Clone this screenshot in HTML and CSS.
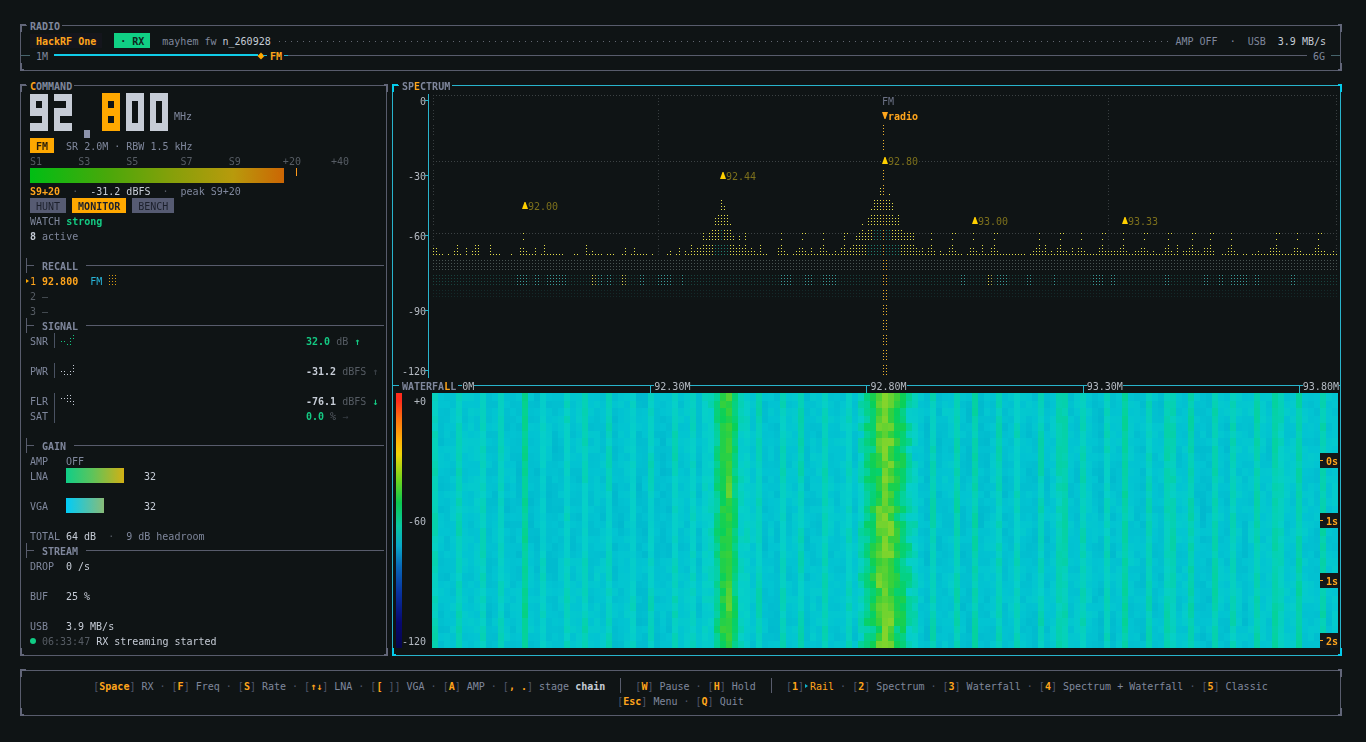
FILE: index.html
```
<!DOCTYPE html>
<html lang="en">
<head>
  <meta charset="UTF-8">
  <meta name="viewport" content="width=device-width, initial-scale=1.0">
  <title>HackRF One - RX 92.800 MHz</title>
  <link rel="stylesheet" href="styles.css">
</head>
<body>
  <!-- device bar -->
  <header class="panel">
    <h2 class="panel-title">RADIO</h2>
    <div class="row device">
      <strong class="device-name">HackRF One</strong>
      <span class="badge rx">· RX</span>
      <span>mayhem fw <span class="bright">n_260928</span></span>
      <span class="leader"></span>
      <span class="pre">AMP OFF  ·  USB  <span class="bright">3.9 MB/s</span></span>
    </div>
    <div class="row band">
      <span class="band-edge"></span>
      <span>1M</span>
      <span class="band-fill"></span>
      <svg class="band-mark" width="8" height="8" viewBox="0 0 8 8"><path d="M4 0.500L7.500 4L4 7.500L0.500 4z" fill="#ffa800"/></svg>
      <span class="band-dash"></span>
      <b class="orange">FM</b>
      <span class="band-dash"></span>
      <span class="band-rest"></span>
      <span>6G</span>
      <span class="band-edge"></span>
    </div>
    <i class="corner tl"></i><i class="corner tr"></i><i class="corner bl"></i><i class="corner br"></i>
  </header>

  <main>
    <section class="panel command">
      <h2 class="panel-title"><span class="orange">C</span>OMMAND</h2>

      <div class="frequency">
        <canvas id="digits" width="138" height="45" role="img" aria-label="92.800"></canvas>
        <span>MHz</span>
      </div>
      <div class="row"><span class="badge fm">FM</span><span class="pre">  SR 2.0M · RBW 1.5 kHz</span></div>
      <div class="row pre dim">S1      S3      S5       S7      S9       +20     +40</div>
      <div class="row meter"><span class="meter-fill"></span><span class="meter-peak"></span></div>
      <div class="row pre"><b class="orange">S9+20</b>  <span class="dim">·</span>  <span class="bright">-31.2 dBFS</span>  <span class="dim">·</span>  peak S9+20</div>
      <div class="row modes">
        <button type="button">HUNT</button>
        <button type="button" class="active">MONITOR</button>
        <button type="button">BENCH</button>
      </div>
      <div class="row pre">WATCH <b class="green">strong</b></div>
      <div class="row pre"><b class="bright">8</b> active</div>
      <div class="row"></div>

      <h3 class="section">RECALL</h3>
      <div class="row pre recall"><span class="orange">1</span> <b class="orange">92.800</b>  <span class="cyan">FM</span> <svg width="9" height="15" viewBox="0 0 9 15" shape-rendering="crispEdges"><path fill="#d99a10" d="M1 2h1v1H1zM4 2h1v1H4zM7 2h1v1H7zM1 5h1v1H1zM4 5h1v1H4zM7 5h1v1H7zM1 8h1v1H1zM4 8h1v1H4zM7 8h1v1H7zM1 11h1v1H1zM4 11h1v1H4zM7 11h1v1H7z"/></svg></div>
      <div class="row pre dim">2 –</div>
      <div class="row pre dim">3 –</div>

      <h3 class="section">SIGNAL</h3>
      <div class="row signal">
        <span class="signal-name">SNR</span>
        <svg width="16" height="15" viewBox="0 0 16 15" shape-rendering="crispEdges"><path fill="#14c882" d="M1 8h1v1H1zM4 8h1v1H4zM7 11h1v1H7zM10 11h1v1h-1zM10 8h1v1h-1zM10 5h1v1h-1zM13 5h1v1h-1zM13 2h1v1h-1z"/></svg>
        <span class="pre"><b class="green">32.0</b> <span class="dim">dB</span> <b class="green">↑</b></span>
      </div>
      <div class="row"></div>
      <div class="row signal">
        <span class="signal-name">PWR</span>
        <svg width="16" height="15" viewBox="0 0 16 15" shape-rendering="crispEdges"><path fill="#c6ccd6" d="M1 8h1v1H1zM4 8h1v1H4zM4 11h1v1H4zM7 11h1v1H7zM10 11h1v1h-1zM10 8h1v1h-1zM13 8h1v1h-1zM13 5h1v1h-1zM13 2h1v1h-1z"/></svg>
        <span class="pre"><b class="bright">-31.2</b> <span class="dim">dBFS</span> <b class="faint">↑</b></span>
      </div>
      <div class="row"></div>
      <div class="row signal">
        <span class="signal-name">FLR</span>
        <svg width="16" height="15" viewBox="0 0 16 15" shape-rendering="crispEdges"><path fill="#c6ccd6" d="M1 5h1v1H1zM4 5h1v1H4zM7 2h1v1H7zM10 2h1v1h-1zM7 5h1v1H7zM10 5h1v1h-1zM7 8h1v1H7zM10 8h1v1h-1zM13 8h1v1h-1zM13 11h1v1h-1z"/></svg>
        <span class="pre"><b class="bright">-76.1</b> <span class="dim">dBFS</span> <b class="green">↓</b></span>
      </div>
      <div class="row signal">
        <span class="signal-name">SAT</span>
        <span></span>
        <span class="pre"><b class="green">0.0</b> <span class="dim">%</span> <span class="faint">→</span></span>
      </div>
      <div class="row"></div>

      <h3 class="section">GAIN</h3>
      <div class="row field"><span>AMP</span><span>OFF</span></div>
      <div class="row field"><span>LNA</span><span class="gain"><i class="gain-lna"></i></span><span class="bright">32</span></div>
      <div class="row"></div>
      <div class="row field"><span>VGA</span><span class="gain"><i class="gain-vga"></i></span><span class="bright">32</span></div>
      <div class="row"></div>
      <div class="row field"><span>TOTAL</span><span class="pre"><span class="bright">64 dB</span>  <span class="dim">·</span>  9 dB headroom</span></div>

      <h3 class="section">STREAM</h3>
      <div class="row field"><span>DROP</span><span class="bright">0 /s</span></div>
      <div class="row"></div>
      <div class="row field"><span>BUF</span><span class="bright">25 %</span></div>
      <div class="row"></div>
      <div class="row field"><span>USB</span><span class="bright">3.9 MB/s</span></div>
      <div class="row log"><i class="led"></i><span class="dim">06:33:47</span><span class="bright">RX streaming started</span></div>
      <i class="corner tl"></i><i class="corner tr"></i><i class="corner bl"></i><i class="corner br"></i>
    </section>

    <section class="panel scope">
      <h2 class="panel-title">SP<span class="orange">E</span>CTRUM</h2>
      <div class="spectrum">
        <div class="db-axis">
          <span class="db0">0</span>
          <span class="db30">-30</span>
          <span class="db60">-60</span>
          <span class="db90">-90</span>
          <span class="db120">-120</span>
        </div>
        <div class="plot" id="plot"><canvas id="trace"></canvas></div>
      </div>

      <div class="divider">
        <h2>WATERFA<span class="orange">L</span>L</h2>
        <div class="freq-axis">
          <span class="first">0M</span>
          <span>92.30M</span>
          <span>92.80M</span>
          <span>93.30M</span>
          <span>93.80M</span>
        </div>
      </div>

      <div class="waterfall">
        <div class="heat-scale"></div>
        <div class="heat-labels"><span class="top">+0</span><span class="mid">-60</span><span class="low">-120</span></div>
        <div class="heat">
          <canvas id="heat"></canvas>
          <div class="ages"><b>0s</b><b>1s</b><b>1s</b><b>2s</b></div>
        </div>
      </div>
      <i class="corner tl"></i><i class="corner tr"></i><i class="corner bl"></i><i class="corner br"></i>
    </section>
  </main>

  <!-- keyboard hints -->
  <footer class="panel">
    <div class="keys pre">[<kbd>Space</kbd>] <span>RX</span> · [<kbd>F</kbd>] <span>Freq</span> · [<kbd>S</kbd>] <span>Rate</span> · [<kbd>↑↓</kbd>] <span>LNA</span> · [<kbd>[</kbd> ]] <span>VGA</span> · [<kbd>A</kbd>] <span>AMP</span> · [<kbd>, .</kbd>] <span>stage</span> <b class="bright">chain</b>  <i class="bar"></i>  [<kbd>W</kbd>] <span>Pause</span> · [<kbd>H</kbd>] <span>Hold</span>  <i class="bar"></i>  [<kbd>1</kbd>]<i class="pointer"></i><span class="orange">Rail</span> · [<kbd>2</kbd>] <span>Spectrum</span> · [<kbd>3</kbd>] <span>Waterfall</span> · [<kbd>4</kbd>] <span>Spectrum + Waterfall</span> · [<kbd>5</kbd>] <span>Classic</span></div>
    <div class="keys pre">[<kbd>Esc</kbd>] <span>Menu</span> · [<kbd>Q</kbd>] <span>Quit</span></div>
    <i class="corner tl"></i><i class="corner tr"></i><i class="corner bl"></i><i class="corner br"></i>
  </footer>

  <script src="app.js"></script>
</body>
</html>
```
FILE: styles.css
```
* {
  box-sizing: border-box;
}

body {
  margin: 0;
  padding: 25px 25px 26px 20px;
  background: #0f1415;
  color: #7f879c;
  font-family: "DejaVu Sans Mono", "Liberation Mono", monospace;
  font-size: 10px;
  line-height: 17px;
  display: flex;
  flex-direction: column;
  gap: 14px;
}

h2, h3 {
  margin: 0;
  font-size: 10px;
  font-weight: bold;
}

canvas, svg {
  display: block;
}

.pre { white-space: pre; }
.bright { color: #c6ccd6; }
.dim { color: #565c64; }
.faint { color: #373d43; }
.orange { color: #ffa51c; }
.green { color: #14c882; }
.cyan { color: #28b4d8; }

/* framed panels */
.panel {
  --line: #585c6c;
  --corner: #626679;
  position: relative;
  border: 1px solid var(--line);
  padding: 7px 0;
}

.panel-title {
  position: absolute;
  top: -7px;
  left: 6px;
  padding: 0 2px 0 3px;
  line-height: 15px;
  background: #0f1415;
}

.corner {
  position: absolute;
  width: 4px;
  height: 8px;
  border: 0 solid var(--corner);
}

.tl { top: -2px; left: -1px; width: 6px; border-width: 2px 0 0 2px; }
.tr { top: -2px; right: -2px; border-width: 2px 2px 0 0; }
.bl { bottom: -1px; left: -1px; border-width: 0 0 2px 2px; }
.br { bottom: -1px; right: -2px; border-width: 0 2px 2px 0; }

.row {
  height: 15px;
}

.badge {
  display: inline-block;
  height: 15px;
  padding: 0 6px;
  vertical-align: top;
  font-weight: bold;
  color: #10241c;
}

.badge.rx { background: #10d084; }
.badge.fm { background: #ffa800; color: #2a1d08; }

/* device bar */
.device {
  display: flex;
  gap: 12px;
  padding: 0 14px 0 9px;
}

.device-name {
  padding: 0 6px;
  background: #14151c;
  color: #ffa51c;
}

.leader {
  flex: 1;
  height: 1px;
  margin: 8px -6px 0;
  background: repeating-linear-gradient(90deg, transparent 0 2px, #626771 2px 3px, transparent 3px 6px);
}

.band {
  display: flex;
  gap: 6px;
}

.band-edge { width: 9px; height: 1px; margin-top: 7px; background: #46646c; }
.band-fill { flex: 0 0 204px; height: 2px; margin-top: 6px; background: #10cce8; }
.band-mark { margin: 4px -8px 0 -7px; }
.band-dash { width: 4px; height: 1px; background: #20b4d0; margin: 7px -3px 0 0; }
.band-dash + .band-rest { margin-left: -3px; }
.band b + .band-dash { margin-left: -4px; }
.band-rest { flex: 1; height: 1px; margin-top: 7px; background: #585c6c; }

/* columns */
main {
  display: flex;
  gap: 5px;
}

.command {
  flex: 0 0 367px;
  padding: 7px 2px 7px 5px;
}

.command .row {
  padding-left: 4px;
}

.frequency {
  display: flex;
  gap: 6px;
  height: 45px;
  padding-left: 4px;
}

.frequency span {
  padding-top: 15px;
}

.meter {
  display: flex;
}

.meter-fill {
  width: 254px;
  background: linear-gradient(90deg, #00be14, #48a80a 30%, #84a00a 55%, #b89a0c 80%, #cc6604);
}

.meter-peak {
  width: 1px;
  height: 8px;
  margin-left: 12px;
  background: #ff9a1c;
}

.modes {
  display: flex;
  gap: 6px;
}

.modes button {
  border: 0;
  height: 15px;
  padding: 1px 6px 0;
  font: inherit;
  line-height: 15px;
  color: #1c202c;
  background: #565b72;
}

.modes .active {
  background: #ffa800;
  font-weight: bold;
}

.section {
  display: flex;
  gap: 8px;
  height: 15px;
  border-left: 1px solid #585c6c;
}

.section::before {
  content: "";
  width: 7px;
  height: 1px;
  margin-top: 7px;
  background: #585c6c;
}

.section::after {
  content: "";
  flex: 1;
  height: 1px;
  margin-top: 7px;
  background: #585c6c;
}

.recall {
  position: relative;
}

.recall::before,
.pointer {
  content: "";
  border: 2px solid transparent;
  border-left: 3px solid #ffa800;
  border-right: 0;
}

.recall::before {
  position: absolute;
  left: 0;
  top: 6px;
}

.recall svg {
  display: inline-block;
  vertical-align: top;
}

.command .signal {
  display: grid;
  grid-template-columns: 25px 1fr 78px;
  grid-template-rows: 15px;
  column-gap: 5px;
}

.signal-name {
  border-right: 1px solid #4a5262;
}

.field {
  display: grid;
  grid-template-columns: 36px 72px 1fr;
  grid-template-rows: 15px;
}

.gain {
  display: flex;
}

.gain-lna { width: 58px; background: linear-gradient(90deg, #0fce88, #5cc45c 45%, #d2b014); }
.gain-vga { width: 38px; background: linear-gradient(90deg, #00ccf8, #88bc78); }
.gain + span { padding-left: 6px; }

.log {
  display: flex;
  gap: 6px;
}

.led {
  width: 6px;
  height: 6px;
  margin-top: 5px;
  border-radius: 50%;
  background: #10cc84;
}

/* spectrum + waterfall */
.scope {
  --line: #28b4cc;
  --corner: #04ccec;
  flex: 1;
  min-width: 0;
  padding: 7px 2px 7px 3px;
}

.spectrum {
  display: flex;
  gap: 3px;
}

.db-axis {
  display: grid;
  grid-template-rows: repeat(19, 15px);
  width: 33px;
  padding-right: 2px;
  border-right: 1px solid #28b4cc;
  text-align: right;
  color: #b4bac2;
}

.db-axis span {
  position: relative;
}

.db-axis span::after {
  content: "";
  position: absolute;
  right: -2px;
  top: 7px;
  width: 3px;
  height: 1px;
  background: #28b4cc;
}

.db0 { grid-row: 1; }
.db30 { grid-row: 6; }
.db60 { grid-row: 10; }
.db90 { grid-row: 15; }
.db120 { grid-row: 19; }

.plot {
  position: relative;
  flex: 1;
  min-width: 0;
}

.plot canvas {
  width: 100%;
  height: 285px;
}

.pin {
  position: absolute;
  display: flex;
  height: 15px;
  color: #7c701c;
  background: #0f1415;
}

.pin svg { margin-top: 4px; }
.pin.tuned { color: #ffa51c; font-weight: bold; }
.pin.mode { color: #6c7286; }

.divider {
  display: flex;
  height: 15px;
  margin: 0 -2px 0 -3px;
  background: linear-gradient(#28b4cc, #28b4cc) 0 7px / 100% 1px no-repeat;
}

.divider h2 {
  margin-left: 6px;
  padding: 0 2px 0 3px;
  background: #0f1415;
}

.freq-axis {
  flex: 1;
  display: flex;
  justify-content: space-between;
  color: #b4bac2;
  margin-left: -24px;
}

.freq-axis span {
  position: relative;
  margin-left: 4px;
  background: #0f1415;
}

.freq-axis span::before {
  content: "";
  position: absolute;
  left: -4px;
  top: 7px;
  height: 8px;
  border-left: 1px solid #28b4cc;
}

.freq-axis .first {
  margin-left: 28px;
}

.freq-axis .first::before {
  display: none;
}

.freq-axis span:last-child {
  margin-right: 1px;
}

.waterfall {
  display: grid;
  grid-template-columns: 6px 24px 1fr;
}

.heat-scale {
  background: linear-gradient(#ff2c1c 0 3%, #ff7010 10%, #ffb408 19%, #f0d408 24%, #70d41c 34%, #0cc850 43%, #08c8a0 52%, #08a8c8 60%, #0868b8 68%, #0834a0 78%, #080870 90%, #06064c);
}

.heat-labels {
  display: grid;
  grid-template-rows: repeat(17, 15px);
  justify-items: end;
  color: #b4bac2;
}

.heat-labels .top { grid-row: 1; }
.heat-labels .mid { grid-row: 9; }
.heat-labels .low { grid-row: 17; }

.heat {
  position: relative;
  margin-left: 6px;
}

.heat canvas {
  width: 100%;
  height: 255px;
  image-rendering: pixelated;
}

.ages {
  position: absolute;
  right: 0;
  bottom: 0;
  display: flex;
  flex-direction: column;
  gap: 45px;
  color: #ffa51c;
}

.ages b {
  height: 15px;
  padding-left: 6px;
  background: linear-gradient(#ffa51c, #ffa51c) 0 7px / 3px 1px no-repeat #14181a;
}

/* keyboard hints */
.keys {
  height: 15px;
  text-align: center;
  color: #50566a;
}

.keys span:not(.orange) { color: #7f879c; }

kbd {
  font: inherit;
  font-weight: bold;
  color: #ffa51c;
}

.bar {
  display: inline-block;
  width: 6px;
  height: 15px;
  vertical-align: top;
  background: linear-gradient(#585c6c, #585c6c) 3px 0 / 1px 100% no-repeat;
}

.pointer {
  display: inline-block;
  margin: 0 2px 2px 1px;
  border-left-color: #10b4cc;
}
```
FILE: app.js
```
const CELL_W = 6;
const CELL_H = 15;
const START = 91.8;
const SPAN = 2;

// small repeatable noise source
let seed = 928;
function rnd() {
  seed = (seed * 1103515245 + 12345) % 2147483648;
  return seed / 2147483648;
}

// big frequency readout, 3x5 block digits
function drawDigits() {
  const font = {
    "9": ["111", "101", "111", "001", "111"],
    "2": ["111", "001", "111", "100", "111"],
    "8": ["111", "101", "111", "101", "111"],
    "0": ["111", "101", "101", "101", "111"]
  };
  const ctx = document.getElementById("digits").getContext("2d");
  const edge = [0, 8, 15, 23, 30, 38];
  const digits = [["9", 0], ["2", 24], ["8", 72], ["0", 96], ["0", 120]];
  digits.forEach(([ch, x]) => {
    ctx.fillStyle = ch === "8" ? "#ffa800" : "#c6ccd6";
    font[ch].forEach((line, r) => {
      for (let c = 0; c < 3; c++) {
        if (line[c] === "1") ctx.fillRect(x + c * 6, edge[r], 6, edge[r + 1] - edge[r]);
      }
    });
  });
  ctx.fillStyle = "#8c93ac";
  ctx.fillRect(54, 37, 6, 8);
}

// braille style dots: 2 x 4 per cell
function drawSpectrum() {
  const canvas = document.getElementById("trace");
  const w = canvas.width = canvas.clientWidth;
  canvas.height = 285;
  const ctx = canvas.getContext("2d");
  const cols = Math.floor(w / 3);
  const k = w / 906;

  function dot(c, level, color) {
    ctx.fillStyle = color;
    ctx.fillRect(c * 3 + 1, Math.floor(level / 4) * CELL_H + 2 + (level % 4) * 3, 1, 1);
  }
  const at = x => Math.round(x * k / 3);

  // grid
  [0, 18, 37].forEach(l => {
    for (let c = 0; c < cols; c++) dot(c, l, "#3c4244");
  });
  [0, 225, 450, 675, 903].forEach(x => {
    for (let l = 0; l < 44; l++) dot(at(x), l, "#383e40");
  });

  // noise floor
  for (let c = 0; c < cols; c++) {
    for (let l = 44; l < 48; l++) dot(c, l, "#485452");
    for (let l = 48; l < 52; l++) dot(c, l, "#17433f");
    for (let l = 52; l < 55; l++) dot(c, l, "#142b2b");
  }
  [[85, 94], [103, 106], [115, 131], [164, 167], [175, 178], [206, 209], [225, 236], [248, 249],
   [349, 358], [373, 379], [391, 402], [529, 532], [565, 574], [595, 598], [620, 621], [661, 670],
   [679, 682], [733, 736], [771, 774], [787, 790], [799, 814], [823, 826], [859, 862]].forEach(([a, b]) => {
    for (let c = at(a); c <= at(b); c++) for (let l = 48; l < 52; l++) dot(c, l, "#3aa09c");
  });
  [158, 188, 554].forEach(x => {
    for (let l = 48; l < 52; l++) {
      dot(at(x), l, "#e4dc50");
      dot(at(x) + 1, l, "#a8a850");
    }
  });

  // trace tops, as dot levels from the top
  const top = [];
  for (let c = 0; c < cols; c++) {
    const gap = c * 3 < 260 * k ? 0.38 : 0.14;
    const r = rnd();
    top[c] = r < gap ? 44 : r < 0.78 ? 43 : r < 0.92 ? 42 : 41;
  }
  [0, 3, 24, 42, 45, 57, 111, 153, 264, 327, 549, 612, 744, 795].forEach(x => { top[at(x)] = x < 5 ? 41 : 40; });
  const carriers = [90, 349, 370, 391, 412, 499, 520, 541, 562, 605, 628, 649, 670, 691, 712, 736, 758, 778, 799, 842, 865, 885];
  carriers.forEach(x => {
    const c = at(x);
    top[c] = 37;
    top[c - 1] = 41;
    top[c + 1] = 42;
  });
  const hump = (x, shape) => shape.forEach((l, i) => {
    const c = at(x) + i - Math.floor(shape.length / 2);
    top[c] = l;
  });
  hump(288, [42, 43, 40, 42, 41, 41, 37, 39, 37, 36, 33, 32, 28, 30, 32, 35, 38, 41, 38, 41, 37, 42, 41, 42, 43]);
  hump(450, [42, 41, 40, 38, 37, 35, 37, 33, 31, 28, 28, 25, 23, 28, 27, 29, 33, 32, 36, 37, 38, 37, 37, 41, 42]);

  for (let c = 0; c < cols; c++) {
    for (let l = top[c]; l < 44; l++) {
      const carrier = top[c] === 37 && Math.abs(c * 3 - 288 * k) > 40 && Math.abs(c * 3 - 450 * k) > 40;
      if (carrier && (l === 38 || l === 40 && c % 3 === 0)) continue;
      const deep = l >= 40 && top[c] < 34 || l >= 36 && top[c] < 29;
      dot(c, l, deep ? "#1f8070" : "#e6e04c");
    }
    if (top[c] === 37 && c % 2) dot(c + 1, 37, "#e6e04c");
  }

  // tuned frequency
  const tuned = at(450);
  for (let l = 8; l < 44; l++) dot(tuned, l, "#f0b430");
  for (let l = 44; l < 76; l++) {
    dot(tuned, l, "#f0b430");
    dot(tuned + 1, l, "#f0b430");
  }
}

function addPins() {
  const plot = document.getElementById("plot");
  const cells = Math.floor(plot.clientWidth / CELL_W);
  const pins = [
    { f: 92.80, row: 0, text: "FM", kind: "mode" },
    { f: 92.80, row: 1, text: "radio", kind: "tuned" },
    { f: 92.80, row: 4, text: "92.80" },
    { f: 92.44, row: 5, text: "92.44" },
    { f: 92.00, row: 7, text: "92.00" },
    { f: 93.00, row: 8, text: "93.00" },
    { f: 93.33, row: 8, text: "93.33" }
  ];
  pins.forEach(p => {
    const el = document.createElement("span");
    el.className = "pin " + (p.kind || "");
    el.style.left = Math.round((p.f - START) / SPAN * (cells - 1)) * CELL_W + "px";
    el.style.top = p.row * CELL_H + "px";
    let mark = "";
    if (p.kind === "tuned") mark = '<svg width="6" height="7" viewBox="0 0 6 7"><path d="M0 0h6L3.500 7h-1z" fill="#ffa51c"/></svg>';
    if (!p.kind) mark = '<svg width="6" height="7" viewBox="0 0 6 7"><path d="M0 7h6L3.500 0h-1z" fill="#ffd000"/></svg>';
    el.innerHTML = mark + p.text;
    plot.appendChild(el);
  });
}

// half-height blocks, one colour per level
function drawWaterfall() {
  const canvas = document.getElementById("heat");
  const cols = canvas.width = Math.round(canvas.clientWidth / CELL_W);
  const rows = canvas.height = 34;
  const ctx = canvas.getContext("2d");
  const stops = [
    [0, [0, 168, 200]], [0.3, [2, 196, 210]], [0.45, [6, 208, 200]], [0.6, [4, 210, 150]],
    [0.75, [8, 208, 90]], [0.88, [60, 208, 56]], [1, [132, 212, 44]]
  ];
  function color(v) {
    v = Math.max(0, Math.min(1, v));
    let i = 1;
    while (stops[i][0] < v) i++;
    const [a, ca] = stops[i - 1];
    const [b, cb] = stops[i];
    const t = (v - a) / (b - a);
    return "rgb(" + ca.map((n, j) => Math.round(n + (cb[j] - n) * t)).join(",") + ")";
  }

  const base = new Array(cols).fill(0);
  const lines = { 0: .5, 4: .5, 8: .48, 11: .47, 15: .62, 18: .45, 22: .48, 25: .5, 29: .48, 33: .45, 36: .48, 40: .5, 43: .46,
    54: .5, 58: .48, 61: .5, 65: .5, 69: .48, 83: .5, 87: .52, 90: .54, 94: .5, 97: .48, 101: .5, 104: .5, 105: .52,
    108: .5, 112: .48, 115: .56, 119: .5, 122: .5, 123: .5, 126: .53, 130: .52, 133: .5, 137: .52, 140: .54, 141: .47, 144: .54, 148: .52 };
  for (let c = 0; c < cols; c++) base[c] = 0.25 + rnd() * 0.08;
  for (const c in lines) base[c] = lines[c];
  const first = { 45: .42, 46: .45, 47: .62, 48: .8, 49: .86, 50: .68, 51: .45, 52: .42 };
  const second = { 71: .44, 72: .58, 73: .68, 74: .84, 75: .97, 76: .88, 77: .74, 78: .66, 79: .5, 80: .42 };
  Object.assign(base, first, second);

  const drift = new Array(cols).fill(0);
  for (let r = 0; r < rows; r++) {
    const wide = rnd();
    for (let c = 0; c < cols; c++) {
      drift[c] = drift[c] * 0.4 + (rnd() - 0.5) * 0.13;
      let v = base[c] + drift[c] * (c in lines ? 0.6 : 1);
      // cooler patch left of the first station
      if (c > 8 && c < 42 && r > 9 && r < 22) v -= 0.03;
      if (c in second && c !== 75) v += wide < 0.35 ? 0.08 : (rnd() - 0.5) * 0.12;
      ctx.fillStyle = color(v);
      ctx.fillRect(c, r, 1, 1);
    }
  }
}

drawDigits();
drawSpectrum();
addPins();
drawWaterfall();
```
